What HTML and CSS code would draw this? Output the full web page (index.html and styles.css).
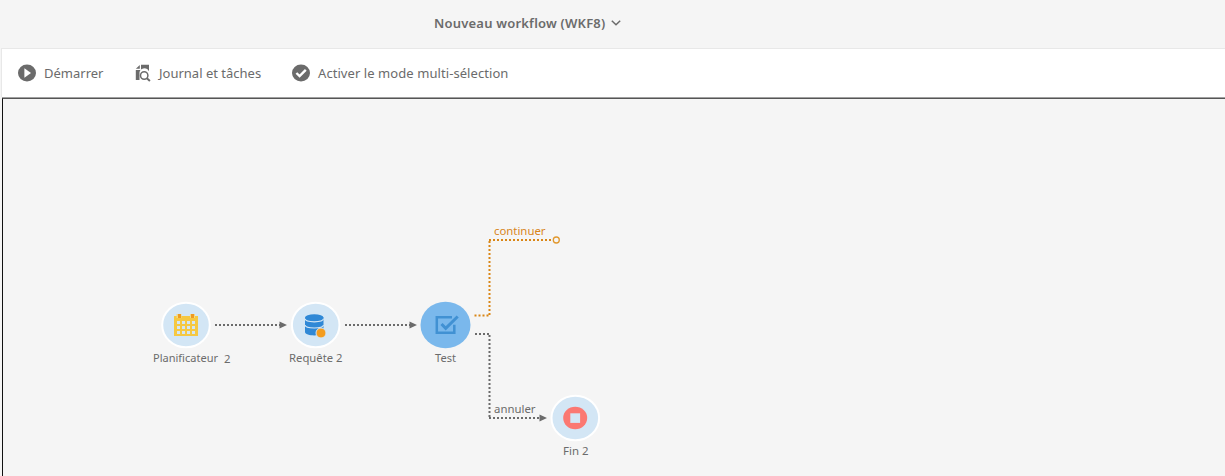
FILE: index.html
```
<!DOCTYPE html>
<html lang="fr">
<head>
<meta charset="utf-8">
<title>Nouveau workflow (WKF8)</title>
<link rel="stylesheet" href="styles.css">
</head>
<body>
<header class="header">
  <h1 class="title">Nouveau workflow (WKF8)</h1>
  <svg class="chevron" width="10" height="6" viewBox="0 0 10 6"><path d="M.8.8 5 4.8 9.2.8"/></svg>
</header>
<nav class="toolbar">
  <button class="action start">
    <svg width="18" height="18" viewBox="0 0 18 18"><ellipse cx="9" cy="9" rx="9" ry="8.5" fill="#6b6b6b"/><path d="M6.400 4.300v9.400L13 9z" fill="#fff"/></svg>
    <span>Démarrer</span>
  </button>
  <button class="action log">
    <svg width="16" height="18" viewBox="0 0 16 18"><path d="M6 .8h8v6.500A5 5 0 0 0 4.500 10v6H.8V6H6z" fill="#6b6b6b"/><path d="M4.800 1v3.800H.8z" fill="#6b6b6b"/><circle cx="9.200" cy="11.500" r="3.700" fill="#fff" stroke="#6b6b6b" stroke-width="1.500"/><path d="m11.900 14.200 3 2.800" stroke="#6b6b6b" stroke-width="1.900"/></svg>
    <span>Journal et tâches</span>
  </button>
  <button class="action multi">
    <svg width="18" height="18" viewBox="0 0 18 18"><ellipse cx="9" cy="9" rx="9" ry="8.500" fill="#6b6b6b"/><path d="m4.400 9 3.200 3.100 6.200-6.300" fill="none" stroke="#fff" stroke-width="2.400"/></svg>
    <span>Activer le mode multi-sélection</span>
  </button>
</nav>
<main class="canvas">
  <svg class="diagram" width="1222" height="377" viewBox="3 99 1222 377">
    <g class="link">
      <path d="M215 325H280M345 325H410M475 334H489.500M489.500 335V418M489 418H540"/>
    </g>
    <g class="arrow"><path d="m279.500 321.500 7.500 3.500-7.500 3.500zM409.500 321.500l7.500 3.500-7.500 3.500zM539.500 414.500l7.500 3.500-7.500 3.500z"/></g>
    <g class="link pending">
      <path d="M474.500 315.500H489M489.500 315V240M489 240H552"/>
    </g>
    <circle class="port" cx="556.300" cy="240" r="3"/>

    <g class="node">
      <ellipse class="disc" cx="186" cy="325" rx="23.800" ry="22.300"/>
      <path d="M174 316h24v20h-24z" fill="#f5c842"/>
      <path d="M177 321h3v3h-3zm5 0h3v3h-3zm5 0h3v3h-3zm5 0h3v3h-3zm-15 5h3v3h-3zm5 0h3v3h-3zm5 0h3v3h-3zm5 0h3v3h-3zm-15 5h3v3h-3zm5 0h3v3h-3zm5 0h3v3h-3zm5 0h3v3h-3z" fill="#d3e6f5"/>
      <path d="M176.500 314h5v4h-5zm13.500 0h5v4h-5z" fill="#f5d980"/>
      <path d="M178 314h3v4h-3zm13 0h3v4h-3z" fill="#ee9a22"/>
      <text x="153" y="362" textLength="65" lengthAdjust="spacingAndGlyphs">Planificateur</text><text x="224" y="363" textLength="6.500" lengthAdjust="spacingAndGlyphs">2</text>
    </g>
    <g class="node">
      <ellipse class="disc" cx="315.700" cy="325" rx="23.800" ry="22.300"/>
      <path d="M305 317.500v14.500c0 4.500 18.500 4.500 18.500 0v-14.500z" fill="#2f88d6"/>
      <ellipse cx="314.250" cy="317.700" rx="9.250" ry="3.400" fill="#2f88d6"/>
      <path d="M305 318.800c.5 4 18 4 18.500 0M305 325c.5 4 18 4 18.500 0" fill="none" stroke="#d3e6f5" stroke-width="1.200"/>
      <circle cx="321" cy="333" r="5" fill="#f39c1f" stroke="#d3e6f5" stroke-width="1"/>
      <text x="289" y="362" textLength="53.500" lengthAdjust="spacingAndGlyphs">Requête 2</text>
    </g>
    <g class="node selected">
      <ellipse class="disc" cx="445.500" cy="325" rx="25" ry="23.300"/>
      <path d="M452 317.300H436.800v15.500h17.500v-8" fill="none" stroke="#4191d3" stroke-width="2.500"/>
      <path d="m441.500 324 4.200 4.300 12-11.800" fill="none" stroke="#4191d3" stroke-width="3"/>
      <text x="435" y="362" textLength="21" lengthAdjust="spacingAndGlyphs">Test</text>
    </g>
    <g class="node">
      <ellipse class="disc" cx="575.300" cy="418" rx="23.800" ry="22.300"/>
      <ellipse cx="575.200" cy="418" rx="12" ry="11.200" fill="#fb7872"/>
      <path d="M570.300 413.300h9.800v9.600h-9.800z" fill="#d3e6f5"/>
      <text x="563" y="455" textLength="25.500" lengthAdjust="spacingAndGlyphs">Fin 2</text>
    </g>
    <text x="494" y="413" textLength="41.500" lengthAdjust="spacingAndGlyphs">annuler</text>
    <text class="pending-label" x="494" y="235" textLength="51.500" lengthAdjust="spacingAndGlyphs">continuer</text>
  </svg>
</main>
</body>
</html>
```
FILE: styles.css
```
* { box-sizing: border-box; }
body {
  margin: 0;
  height: 476px;
  overflow: hidden;
  background: #f5f5f5;
  color: #6b6b6b;
  font-family: "Noto Sans", sans-serif;
  display: flex;
  flex-direction: column;
}
.header {
  height: 48px;
  padding: 13px 0 0 434px;
  display: flex;
  gap: 5px;
}
.title {
  margin: 0;
  font-size: 13px;
  font-weight: 600;
  letter-spacing: 0.2px;
  line-height: 20px;
  width: 172px;
  white-space: nowrap;
}
.chevron { margin-top: 7px; fill: none; stroke: #6b6b6b; stroke-width: 1.5; }
.toolbar {
  height: 49px;
  margin-left: 1px;
  padding-left: 16px;
  display: flex;
  align-items: center;
  background: #fff;
  border-top: 1px solid #e8e8e8;
  border-left: 1px solid #e8e8e8;
}
.action {
  display: flex;
  align-items: center;
  gap: 8px;
  padding: 0;
  border: 0;
  background: none;
  color: inherit;
  font: 13px/20px "Noto Sans", sans-serif;
  white-space: nowrap;
}
.start { width: 117px; }
.log { width: 157px; }
.multi { letter-spacing: 0.07px; }
.canvas {
  flex: 1;
  margin-left: 2px;
  border-top: 1px solid #a0a0a0;
}
.diagram {
  display: block;
  box-sizing: content-box;
  border-top: 1px solid #555;
  border-left: 1px solid #111;
}
.diagram text { font-size: 11.5px; fill: #6b6b6b; }
.diagram .pending-label { fill: #d8851c; }
.link { fill: none; stroke: #6b6b6b; stroke-width: 2; stroke-dasharray: 2 2; }
.pending { stroke: #d98616; }
.arrow { fill: #6b6b6b; }
.port { fill: #f5f5f5; stroke: #e1982f; stroke-width: 1.3; }
.disc { fill: #d3e6f5; stroke: #fff; stroke-width: 2; }
.selected .disc { fill: #7ab8ec; stroke: none; }
```
